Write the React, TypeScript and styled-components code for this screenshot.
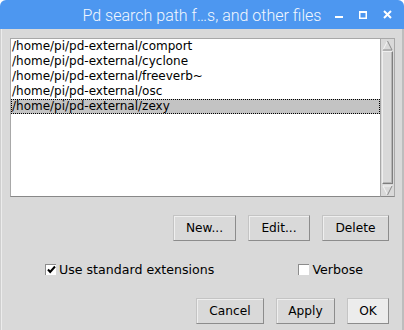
import React from 'react'
import styled, { createGlobalStyle } from 'styled-components'

const GlobalStyle = createGlobalStyle`
  html, body {
    margin: 0;
    padding: 0;
    background: #ffffff;
  }
`

const Window = styled.div`
  width: 404px;
  height: 330px;
  display: flex;
  flex-direction: column;
  border-radius: 6px 6px 0 0;
  overflow: hidden;
  font-family: 'DejaVu Sans', 'Liberation Sans', sans-serif;
  font-size: 12px;
  color: #000;
`

const TitleBar = styled.div`
  height: 29px;
  flex: none;
  background: #4d97f0;
  display: grid;
  grid-template-columns: 1fr auto 1fr;
  align-items: center;
`

const Title = styled.div`
  font-family: Roboto, 'Noto Sans', sans-serif;
  font-weight: 300;
  font-size: 16px;
  color: #f3f7fe;
  white-space: nowrap;
  padding-top: 1px;
`

const Controls = styled.div`
  justify-self: end;
  display: flex;
  align-items: center;
  gap: 16px;
  padding-right: 12px;
`

const Body = styled.div`
  flex: 1;
  background: #d9d9d9;
  border-left: 1px solid #cfcfcf;
  border-right: 2px solid #bdbdbd;
  box-shadow: inset 1px 0 0 #ececec;
  display: flex;
  flex-direction: column;
  padding: 9px 0 0 9px;
`

const ListArea = styled.div`
  display: flex;
  height: 159px;
`

const ListBox = styled.div`
  width: 369px;
  background: #ffffff;
  border: 1px solid #a8a8a8;
  border-bottom-color: #888888;
  border-right: none;
  display: flex;
  flex-direction: column;
`

const ListRow = styled.div<{ $selected?: boolean }>`
  height: 15px;
  line-height: 14px;
  padding-left: 1px;
  box-sizing: border-box;
  white-space: nowrap;
  background: ${({ $selected }) => ($selected ? '#c3c3c3' : 'transparent')};
  outline: ${({ $selected }) => ($selected ? '1px dotted #000' : 'none')};
  outline-offset: -1px;
`

const ScrollBar = styled.div`
  width: 13px;
  background: #d9d9d9;
  border: 1px solid #a8a8a8;
  border-bottom-color: #888;
  display: flex;
  flex-direction: column;
`

const ArrowBox = styled.div`
  height: 12px;
  flex: none;
  display: flex;
  align-items: center;
  justify-content: center;
`

const Thumb = styled.div`
  flex: 1;
  margin: 0 1px;
  border: 1px solid;
  border-color: #efefef #7e7e7e #7e7e7e #efefef;
  box-shadow: inset -1px -1px 0 #b5b5b5;
  background: #d9d9d9;
`

const ButtonRow = styled.div<{ $top: number }>`
  display: flex;
  justify-content: flex-end;
  gap: 12px;
  padding-right: 13px;
  margin-top: ${({ $top }) => $top}px;
`

const Button = styled.button<{ $w: number; $light?: boolean }>`
  width: ${({ $w }) => $w}px;
  height: 26px;
  padding: 0;
  font-family: 'DejaVu Sans', 'Liberation Sans', sans-serif;
  font-size: 12.2px;
  color: #000;
  background: ${({ $light }) => ($light ? '#ececec' : '#d9d9d9')};
  border: 1px solid;
  border-color: #c4c4c4 #8c8c8c #8c8c8c #c4c4c4;
  box-shadow: inset 1px 1px 0 #efefef;
  border-radius: 0;
`

const CheckRow = styled.div`
  display: flex;
  justify-content: space-between;
  align-items: center;
  margin-top: 21px;
  padding-left: 35px;
  padding-right: 39px;
  height: 14px;
`

const Check = styled.label`
  display: flex;
  align-items: center;
  gap: 3px;
  white-space: nowrap;
  font-size: 12.6px;
`

const Box = styled.span`
  width: 10px;
  height: 10px;
  background: #fff;
  border-left: 1px solid #8c8c8c;
  border-top: 1px solid #8c8c8c;
  display: flex;
  align-items: center;
  justify-content: center;
`

const paths = [
  '/home/pi/pd-external/comport',
  '/home/pi/pd-external/cyclone',
  '/home/pi/pd-external/freeverb~',
  '/home/pi/pd-external/osc',
  '/home/pi/pd-external/zexy',
]

function CheckBox({ checked }: { checked: boolean }) {
  return (
    <Box>
      {checked && (
        <svg width="9" height="9" viewBox="0 0 9 9">
          <path d="M1 4.5 L3.2 7 L8 1.5" fill="none" stroke="#000" strokeWidth="2" />
        </svg>
      )}
    </Box>
  )
}

export default function App() {
  return (
    <>
      <GlobalStyle />
      <Window>
        <TitleBar>
          <div />
          <Title>Pd search path f…s, and other files</Title>
          <Controls>
            <svg width="8" height="8" viewBox="0 0 8 8">
              <rect x="0" y="5" width="8" height="2" fill="#fff" />
            </svg>
            <svg width="8" height="8" viewBox="0 0 8 8">
              <rect x="0.75" y="0.75" width="6.5" height="6.5" fill="none" stroke="#fff" strokeWidth="1.5" />
              <rect x="0" y="0" width="8" height="2" fill="#fff" />
            </svg>
            <svg width="9" height="9" viewBox="0 0 9 9">
              <path d="M1 1 L8 8 M8 1 L1 8" stroke="#fff" strokeWidth="2" />
            </svg>
          </Controls>
        </TitleBar>
        <Body>
          <ListArea>
            <ListBox>
              {paths.map((p, i) => (
                <ListRow key={p} $selected={i === paths.length - 1}>
                  {p}
                </ListRow>
              ))}
            </ListBox>
            <ScrollBar>
              <ArrowBox>
                <svg width="11" height="11" viewBox="0 0 11 11">
                  <path d="M5.5 1 L10 10 L1 10 Z" fill="#d9d9d9" />
                  <path d="M5.5 1 L1 10" stroke="#f4f4f4" strokeWidth="1" />
                  <path d="M5.5 1 L10 10 L1 10" fill="none" stroke="#8a8a8a" strokeWidth="1" />
                </svg>
              </ArrowBox>
              <Thumb />
              <ArrowBox>
                <svg width="11" height="11" viewBox="0 0 11 11">
                  <path d="M1 1 L10 1 L5.5 10 Z" fill="#d9d9d9" />
                  <path d="M1 1 L10 1 M1 1 L5.5 10" fill="none" stroke="#f4f4f4" strokeWidth="1" />
                  <path d="M10 1 L5.5 10" stroke="#8a8a8a" strokeWidth="1" />
                </svg>
              </ArrowBox>
            </ScrollBar>
          </ListArea>
          <ButtonRow $top={18}>
            <Button $w={63}>New...</Button>
            <Button $w={62}>Edit...</Button>
            <Button $w={67}>Delete</Button>
          </ButtonRow>
          <CheckRow>
            <Check>
              <CheckBox checked />
              Use standard extensions
            </Check>
            <Check>
              <CheckBox checked={false} />
              Verbose
            </Check>
          </CheckRow>
          <ButtonRow $top={22}>
            <Button $w={68}>Cancel</Button>
            <Button $w={59}>Apply</Button>
            <Button $w={42} $light>
              OK
            </Button>
          </ButtonRow>
        </Body>
      </Window>
    </>
  )
}
